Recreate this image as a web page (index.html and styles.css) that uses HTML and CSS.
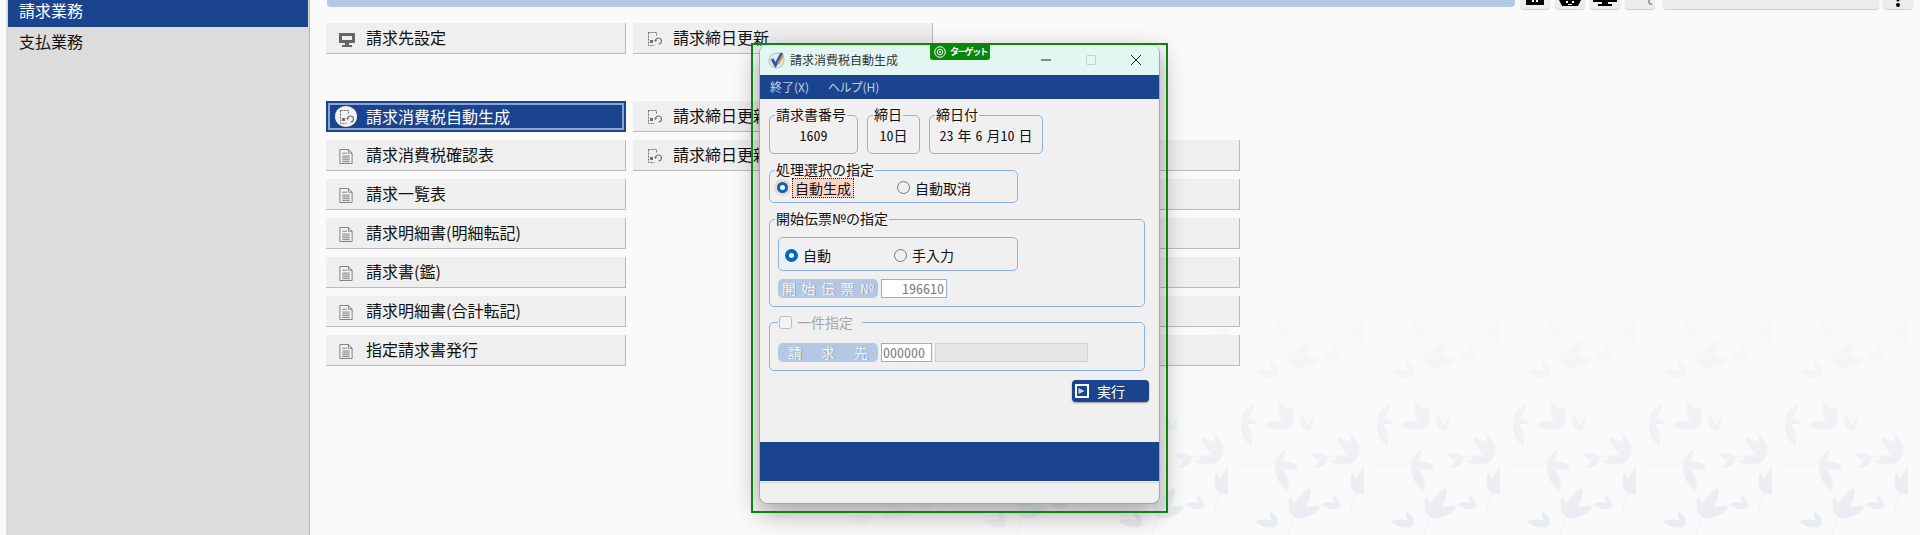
FILE: index.html
```html
<!DOCTYPE html>
<html lang="ja">

<head>
    <meta charset="UTF-8">
    <title>請求消費税自動生成</title>
    <link rel="stylesheet" href="styles.css">
</head>

<body>
    <svg width="0" height="0" class="defs">
        <symbol id="doc" viewBox="0 0 14 16">
            <path d="M.5.5h9l4 4v11H.5z" fill="#f4f4f4" stroke="#7a7a7a"/>
            <path d="M9.5.5v4h4M3 4.500h5M3 7.500h8M3 9.500h8M3 11.500h8M3 13.500h8" fill="none" stroke="#7a7a7a"/>
        </symbol>
        <symbol id="update" viewBox="0 0 16 16">
            <path d="M2.500 1.500h8v4M2.500 1.500v13h6" fill="none" stroke="#6f6f6f" stroke-dasharray="2 1"/>
            <rect x="4" y="9" width="3" height="3" fill="#6f6f6f"/>
            <path d="M9.500 10a3 3 0 1 1 3 3" fill="none" stroke="#6f6f6f" stroke-width="1.2"/>
            <path d="M8 9l1.500 2 1.500-2z" fill="#6f6f6f"/>
        </symbol>
        <path id="leaf" d="M0 0C-7-5-8-17-3-27C3-21 6-8 0 0Z"/>
    </svg>

    <svg class="wallpaper" width="1120" height="535">
        <defs>
            <pattern id="sprigs" width="136" height="150" patternUnits="userSpaceOnUse" patternTransform="translate(20 85)">
                <g fill="#e8ebf2">
                    <use href="#leaf" transform="translate(62 42) rotate(-18) scale(1.05)"/>
                    <use href="#leaf" transform="translate(62 42) rotate(-78) scale(.95)"/>
                    <use href="#leaf" transform="translate(62 42) rotate(8) scale(.8)"/>
                    <use href="#leaf" transform="translate(80 46) rotate(-20) scale(.6)"/>
                    <use href="#leaf" transform="translate(80 46) rotate(30) scale(.55)"/>
                    <use href="#leaf" transform="translate(130 72) rotate(-40) scale(1.05)"/>
                    <use href="#leaf" transform="translate(130 72) rotate(-10) scale(.85)"/>
                    <use href="#leaf" transform="translate(130 72) rotate(-95) scale(1)"/>
                    <use href="#leaf" transform="translate(100 72) rotate(-80) scale(.65)"/>
                    <use href="#leaf" transform="translate(100 72) rotate(-125) scale(.65)"/>
                    <use href="#leaf" transform="translate(14 36) rotate(165) scale(1)"/>
                    <use href="#leaf" transform="translate(14 36) rotate(100) scale(.6)"/>
                    <use href="#leaf" transform="translate(14 36) rotate(40) scale(.8)"/>
                    <use href="#leaf" transform="translate(48 80) rotate(100) scale(.85)"/>
                    <use href="#leaf" transform="translate(48 80) rotate(160) scale(1.05)"/>
                    <use href="#leaf" transform="translate(48 80) rotate(40) scale(.7)"/>
                    <use href="#leaf" transform="translate(66 132) rotate(35) scale(1.25)"/>
                    <use href="#leaf" transform="translate(66 132) rotate(75) scale(1.05)"/>
                    <use href="#leaf" transform="translate(66 132) rotate(-5) scale(.75)"/>
                    <use href="#leaf" transform="translate(50 140) rotate(-25) scale(.6)"/>
                    <use href="#leaf" transform="translate(50 140) rotate(-75) scale(.85)"/>
                    <use href="#leaf" transform="translate(128 108) rotate(30) scale(1.2)"/>
                    <use href="#leaf" transform="translate(128 108) rotate(75) scale(1)"/>
                    <use href="#leaf" transform="translate(128 108) rotate(-5) scale(.75)"/>
                    <use href="#leaf" transform="translate(112 122) rotate(-25) scale(.5)"/>
                    <use href="#leaf" transform="translate(112 122) rotate(-75) scale(.7)"/>
                </g>
                <g fill="none" stroke="#eef0f5">
                    <path d="M62 42C66 56 72 60 84 60M14 36C24 56 32 64 48 80M48 80H10M130 72C110 70 104 72 100 72M66 132L60 150M128 108L122 130"/>
                </g>
            </pattern>
            <linearGradient id="fadev" x1="0" y1="0" x2="0" y2="1">
                <stop offset=".56" stop-color="#fff" stop-opacity="0"/>
                <stop offset=".78" stop-color="#fff" stop-opacity=".55"/>
                <stop offset="1" stop-color="#fff" stop-opacity="1"/>
            </linearGradient>
            <linearGradient id="fadeh" x1="0" y1="0" x2="1" y2="0">
                <stop offset="0" stop-color="#fff" stop-opacity="0"/>
                <stop offset=".3" stop-color="#fff" stop-opacity="1"/>
            </linearGradient>
            <mask id="maskv">
                <rect width="1120" height="535" fill="url(#fadev)"/>
            </mask>
            <mask id="maskh">
                <rect width="1120" height="535" fill="url(#fadeh)"/>
            </mask>
        </defs>
        <g mask="url(#maskh)">
            <rect width="1120" height="535" fill="url(#sprigs)" mask="url(#maskv)"/>
        </g>
    </svg>

    <div class="app">
        <nav class="sidebar">
            <div class="side-item current">請求業務</div>
            <div class="side-item">支払業務</div>
        </nav>

        <main class="main">
            <header class="topbar">
                <div class="topbar-title"></div>
                <div class="tool">
                    <svg width="18" height="5" viewBox="0 0 18 5"><path d="M0 0h18v5H0z"/><path d="M6 0h2v2H6zM10 0h2v2h-2z" fill="#fff"/></svg>
                </div>
                <div class="tool">
                    <svg width="22" height="7" viewBox="0 0 22 7"><path d="M0 0h22l-3 6H3z"/><path d="M7 1h2v2H7zM13 1h2v2h-2zM9 4h4v1H9z" fill="#fff"/></svg>
                </div>
                <div class="tool">
                    <svg width="24" height="6" viewBox="0 0 24 6"><path d="M0 0h24v2H15v2h4v2H5V4h4V2H0z"/></svg>
                </div>
                <div class="tool tool-end">
                    <svg width="5" height="5" viewBox="0 0 5 5"><path d="M1 0v2a2 2 0 0 0 3 2" fill="none" stroke="#555"/></svg>
                </div>
                <div class="tool-wide"></div>
                <div class="tool tool-last">
                    <svg width="4" height="7" viewBox="0 0 4 7"><circle cx="2" cy="0" r="1.500"/><circle cx="2" cy="5" r="2"/></svg>
                </div>
            </header>

            <div class="menu-grid">
                <a class="menu-btn">
                    <svg class="ico ico-pc" width="16" height="14" viewBox="0 0 16 14"><path d="M0 0h16v10H0z" fill="#666"/><path d="M3 3h10v4H3z" fill="#efefef"/><path d="M6 10h4v2H6zM3 12h10v2H3z" fill="#666"/></svg>
                    請求先設定
                </a>
                <a class="menu-btn"><svg class="ico" width="16" height="16"><use href="#update"/></svg>請求締日更新</a>
                <div></div>

                <div></div><div></div><div></div>

                <a class="menu-btn selected">
                    <span class="ico-round">
                        <svg width="16" height="16"><use href="#update"/></svg>
                    </span>
                    請求消費税自動生成
                </a>
                <a class="menu-btn"><svg class="ico" width="16" height="16"><use href="#update"/></svg>請求締日更新</a>
                <div></div>

                <a class="menu-btn"><svg class="ico ico-doc" width="14" height="15"><use href="#doc"/></svg>請求消費税確認表</a>
                <a class="menu-btn"><svg class="ico" width="16" height="16"><use href="#update"/></svg>請求締日更新</a>
                <a class="menu-btn"></a>

                <a class="menu-btn"><svg class="ico ico-doc" width="14" height="15"><use href="#doc"/></svg>請求一覧表</a>
                <div></div>
                <a class="menu-btn"></a>

                <a class="menu-btn"><svg class="ico ico-doc" width="14" height="15"><use href="#doc"/></svg>請求明細書(明細転記)</a>
                <div></div>
                <a class="menu-btn"></a>

                <a class="menu-btn"><svg class="ico ico-doc" width="14" height="15"><use href="#doc"/></svg>請求書(鑑)</a>
                <div></div>
                <a class="menu-btn"></a>

                <a class="menu-btn"><svg class="ico ico-doc" width="14" height="15"><use href="#doc"/></svg>請求明細書(合計転記)</a>
                <div></div>
                <a class="menu-btn"></a>

                <a class="menu-btn"><svg class="ico ico-doc" width="14" height="15"><use href="#doc"/></svg>指定請求書発行</a>
                <div></div>
                <a class="menu-btn"></a>
            </div>
        </main>
    </div>

    <section class="dialog">
        <div class="titlebar">
            <svg class="app-ico" width="18" height="18" viewBox="0 0 18 18">
                <circle cx="8.500" cy="9.500" r="7.500" fill="#e8e8e8" stroke="#b5b5b5"/>
                <path d="M4 8l3.500 6L14 2" fill="none" stroke="#1f5fb4" stroke-width="3"/>
                <path d="M10 13l5-9" fill="none" stroke="#ee8a2a" stroke-width="2"/>
            </svg>
            <span class="title-text">請求消費税自動生成</span>
            <div class="winctl">
                <svg width="10" height="10" viewBox="0 0 10 10"><path d="M0 5h10" stroke="#222"/></svg>
                <svg width="10" height="10" viewBox="0 0 10 10"><rect x=".5" y=".5" width="9" height="9" rx="1" fill="none" stroke="#c4cfcc"/></svg>
                <svg width="10" height="10" viewBox="0 0 10 10"><path d="M0 0l10 10M10 0L0 10" stroke="#222"/></svg>
            </div>
        </div>
        <div class="menubar">
            <span>終了(X)</span>
            <span>ヘルプ(H)</span>
        </div>

        <div class="dialog-body">
            <div class="info-row">
                <div class="group info-no"><span class="legend">請求書番号</span>1609</div>
                <div class="group info-day"><span class="legend">締日</span>10日</div>
                <div class="group info-date"><span class="legend">締日付</span>23 年 6 月10 日</div>
            </div>

            <div class="group mode-group">
                <span class="legend">処理選択の指定</span>
                <div class="radio-cell focus-cell">
                    <i class="radio on"></i><span class="focus-text">自動生成</span>
                </div>
                <div class="radio-cell">
                    <i class="radio"></i>自動取消
                </div>
            </div>

            <div class="group start-group">
                <span class="legend">開始伝票№の指定</span>
                <div class="group start-radios">
                    <div class="radio-cell start-auto"><i class="radio on"></i>自動</div>
                    <div class="radio-cell"><i class="radio"></i>手入力</div>
                </div>
                <div class="field-row">
                    <span class="field-label"><b>開</b><b>始</b><b>伝</b><b>票</b><b>№</b></span>
                    <span class="input num">196610</span>
                </div>
            </div>

            <div class="group single-group">
                <span class="legend legend-check"><i class="check"></i>一件指定</span>
                <div class="field-row">
                    <span class="field-label wide-label"><b>請</b><b>求</b><b>先</b></span>
                    <span class="input code">000000</span>
                    <span class="readonly"></span>
                </div>
            </div>

            <div class="run-row">
                <a class="run-btn">
                    <svg width="14" height="14" viewBox="0 0 14 14"><path d="M0 0h14v14H0z" fill="#fff"/><path d="M2 2h10v10H2z" fill="#1a458e"/><path d="M3.500 4l6 3-6 3z" fill="#cfd9ea"/></svg>
                    実行
                </a>
            </div>
        </div>

        <div class="message-bar"></div>
    </section>

    <div class="target-frame">
        <div class="target-tag">
            <svg width="12" height="12" viewBox="0 0 12 12"><circle cx="6" cy="6" r="5.300" fill="none" stroke="#fff"/><circle cx="6" cy="6" r="2.800" fill="none" stroke="#fff"/><circle cx="6" cy="6" r="1" fill="#fff"/></svg>
            ターゲット
        </div>
    </div>
</body>

</html>
```

FILE: styles.css
```css
html,
body {
    height: 100%;
    margin: 0;
}

body {
    position: relative;
    overflow: hidden;
    background-color: #fafafa;
    color: #111;
    font-family: "Noto Sans CJK JP", "Noto Sans", sans-serif;
}

.defs {
    position: absolute;
}

.wallpaper {
    position: absolute;
    left: 800px;
    top: 0;
    z-index: -1;
}

.app {
    display: flex;
    height: 100%;
}

/* left column */
.sidebar {
    width: 304px;
    margin-left: 6px;
    padding-left: 2px;
    box-sizing: border-box;
    flex-shrink: 0;
    background-color: #dcdcdc;
    border-right: 1px solid #b4b4b4;
}

.side-item {
    height: 28px;
    padding-left: 11px;
    font-size: 16px;
    line-height: 28px;
}

.side-item.current {
    height: 27px;
    margin-right: 1px;
    line-height: 20px;
    background-color: #1a458e;
    color: #fff;
}

/* right side */
.main {
    flex: 1;
    padding: 0 7px 0 16px;
    min-width: 0;
}

.topbar {
    display: flex;
    align-items: flex-start;
    gap: 5px;
    height: 10px;
}

.topbar-title {
    flex: 1;
    height: 7px;
    margin-left: 1px;
    background-color: #b4c8e6;
    border-radius: 0 0 4px 4px;
}

.tool,
.tool-wide {
    display: flex;
    justify-content: center;
    height: 9px;
    background-color: #ececec;
    border-radius: 0 0 4px 4px;
    box-shadow: 0 1px 1px #cfcfcf;
}

.tool {
    width: 30px;
    align-items: flex-start;
}

.tool-end {
    justify-content: flex-end;
    padding-right: 2px;
    box-sizing: border-box;
}

.tool-wide {
    width: 216px;
    margin-left: 3px;
}

.tool-last {
    margin-left: -1px;
}

.menu-grid {
    display: grid;
    grid-template-columns: 300px 300px 300px;
    grid-auto-rows: 31px;
    column-gap: 7px;
    row-gap: 8px;
    margin-top: 13px;
}

.menu-btn {
    display: flex;
    align-items: center;
    box-sizing: border-box;
    padding: 0 0 2px 40px;
    position: relative;
    background-color: #efefef;
    border-right: 1px solid #bbb;
    border-bottom: 1px solid #bbb;
    font-size: 16px;
    line-height: 20px;
    white-space: nowrap;
}

.menu-btn .ico {
    position: absolute;
    left: 13px;
    top: 8px;
}

.menu-btn .ico-pc {
    top: 10px;
}

.menu-btn .ico-doc {
    top: 9px;
}

.menu-btn.selected {
    background-color: #1a458e;
    color: #fff;
    border: 0;
    box-shadow: inset 0 0 0 2px #1a458e, inset 0 0 0 4px #8ea5d0;
}

.ico-round {
    position: absolute;
    left: 9px;
    top: 5px;
    display: flex;
    align-items: center;
    justify-content: center;
    width: 22px;
    height: 21px;
    border-radius: 50%;
    background-color: #f2f2f2;
}

/* dialog window */
.dialog {
    position: absolute;
    left: 759px;
    top: 45px;
    width: 401px;
    height: 459px;
    box-sizing: border-box;
    display: flex;
    flex-direction: column;
    background-color: #f0f0f0;
    border: 1px solid #a8a8a8;
    border-top: 0;
    border-radius: 8px;
    box-shadow: 0 8px 26px rgba(0, 0, 0, 0.38);
    font-size: 14px;
    font-feature-settings: "hwid";
    line-height: 18px;
}

.titlebar {
    display: flex;
    align-items: center;
    height: 30px;
    flex-shrink: 0;
    padding-left: 8px;
    background-color: #e3f7f2;
    border-radius: 8px 8px 0 0;
}

.app-ico {
    margin-right: 4px;
}

.title-text {
    font-size: 12px;
    color: #333;
}

.winctl {
    display: flex;
    gap: 35px;
    margin-left: auto;
    margin-right: 18px;
}

.menubar {
    display: flex;
    gap: 19px;
    align-items: center;
    height: 24px;
    flex-shrink: 0;
    padding-left: 10px;
    background-color: #1a458e;
    color: #c3d0e6;
    font-size: 12px;
    font-feature-settings: "palt";
}

.dialog-body {
    flex: 1;
    padding: 16px 10px 0 9px;
}

.group {
    position: relative;
    box-sizing: border-box;
    border: 1px solid #8db0ec;
    border-radius: 5px;
}

.legend {
    position: absolute;
    left: 5px;
    top: -11px;
    padding: 0 1px;
    background-color: #f0f0f0;
    white-space: nowrap;
}

.info-row {
    display: flex;
    gap: 9px;
}

.info-row .group {
    height: 39px;
    padding-top: 10px;
    text-align: center;
}

.info-no {
    width: 89px;
}

.info-day {
    width: 53px;
}

.info-date {
    width: 114px;
    white-space: pre;
    word-spacing: -3px;
}

.mode-group {
    display: flex;
    align-items: center;
    width: 249px;
    height: 33px;
    margin-top: 16px;
    padding: 2px 0 0 6px;
}

.radio-cell {
    display: flex;
    align-items: center;
    gap: 5px;
}

.radio {
    width: 13px;
    height: 13px;
    box-sizing: border-box;
    border: 1.5px solid #777;
    border-radius: 50%;
    background-color: #f0f0f0;
}

.radio.on {
    border: 4px solid #0067c0;
    background-color: #fff;
}

.focus-cell {
    width: 121px;
}

.focus-text {
    margin-left: -2px;
    padding: 0 3px;
    background-color: #f9d5c8;
    outline: 1px dotted #222;
    outline-offset: -1px;
    line-height: 20px;
}

.focus-cell .radio {
    outline: 3px solid #f9d5c8;
    outline-offset: -1px;
}

.start-group {
    width: 376px;
    height: 88px;
    margin-top: 16px;
    padding: 17px 8px 0;
}

.start-radios {
    display: flex;
    align-items: center;
    width: 240px;
    height: 34px;
    padding: 2px 0 0 6px;
}

.start-auto {
    width: 109px;
}

.field-row {
    display: flex;
    gap: 3px;
    margin-top: 8px;
}

.field-label {
    display: flex;
    justify-content: space-between;
    width: 100px;
    height: 19px;
    box-sizing: border-box;
    padding: 0 4px;
    background-color: #b4c8e6;
    border-radius: 5px;
    color: #f2f4f8;
    text-shadow: 1px 0 0 #8a95a8;
    line-height: 19px;
    white-space: nowrap;
}

.field-label b {
    font-weight: 400;
}

.wide-label {
    padding: 0 10px;
}

.input {
    height: 19px;
    box-sizing: border-box;
    background-color: #fff;
    border: 1px solid #8db0ec;
    color: #808080;
    line-height: 17px;
}

.input.num {
    width: 66px;
    padding-right: 2px;
    text-align: right;
}

.input.code {
    width: 51px;
    padding-left: 1px;
}

.readonly {
    width: 153px;
    height: 19px;
    box-sizing: border-box;
    background-color: #e6e6e6;
    border: 1px solid #d2d2d2;
}

.single-group {
    width: 376px;
    height: 49px;
    margin-top: 15px;
    padding: 12px 8px 0;
}

.single-group .field-row {
    margin-top: 8px;
}

.legend-check {
    display: flex;
    align-items: center;
    gap: 5px;
    left: 8px;
    top: -10px;
    padding-right: 9px;
    color: #a6a6a6;
}

.check {
    width: 13px;
    height: 13px;
    box-sizing: border-box;
    background-color: #f4f4f4;
    border: 1px solid #bdbdbd;
    border-radius: 3px;
}

.run-row {
    display: flex;
    justify-content: flex-end;
    margin-top: 9px;
}

.run-btn {
    display: flex;
    align-items: center;
    gap: 8px;
    width: 77px;
    height: 22px;
    box-sizing: border-box;
    padding-left: 3px;
    background-color: #1a458e;
    border-radius: 4px;
    box-shadow: 0 1px 2px #9a9a9a;
    color: #fff;
}

.message-bar {
    height: 39px;
    margin-bottom: 22px;
    background-color: #1a458e;
    box-shadow: 0 1px 0 #f4f4f4, 0 2px 0 #d5d5d5;
}

/* green frame drawn over the window */
.target-frame {
    position: absolute;
    left: 751px;
    top: 43px;
    width: 417px;
    height: 470px;
    box-sizing: border-box;
    border: 2px solid #0a860a;
}

.target-tag {
    position: absolute;
    left: 177px;
    top: -2px;
    display: flex;
    align-items: center;
    gap: 4px;
    width: 60px;
    height: 17px;
    box-sizing: border-box;
    padding-left: 4px;
    background-color: #0a860a;
    border-radius: 0 0 3px 3px;
    color: #fff;
    font-size: 9px;
    font-weight: 700;
    letter-spacing: -1.6px;
    line-height: 17px;
}
```
